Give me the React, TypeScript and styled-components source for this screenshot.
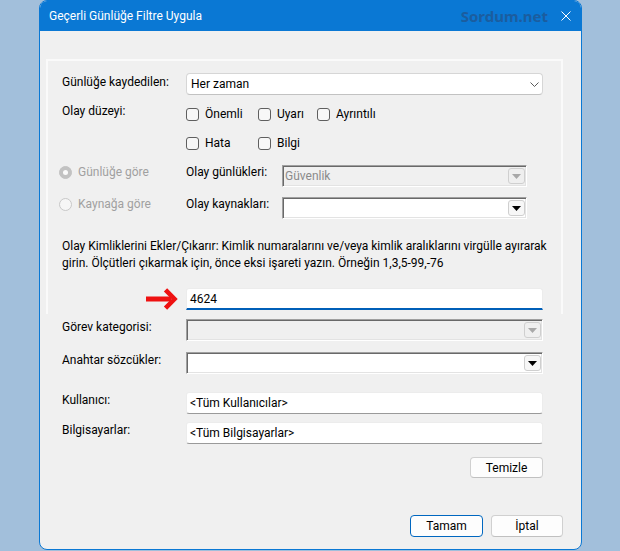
import React from 'react';
import styled, { createGlobalStyle } from 'styled-components';

const GlobalStyle = createGlobalStyle`
  html, body {
    margin: 0;
    padding: 0;
  }
  body {
    background: #a2bfdb;
    font-family: Roboto, "Noto Sans", "DejaVu Sans", sans-serif;
    font-size: 12px;
    color: #000;
  }
`;

const Desktop = styled.div`
  width: 620px;
  height: 551px;
  box-sizing: border-box;
  padding-left: 39px;
  overflow: hidden;
`;

const Window = styled.div`
  width: 543px;
  height: 550px;
  box-sizing: border-box;
  display: flex;
  flex-direction: column;
  background: #f0f0f0;
  border: 1px solid #0a78d4;
  border-radius: 8px;
  overflow: hidden;
`;

const TitleBar = styled.div`
  height: 30px;
  flex-shrink: 0;
  display: flex;
  align-items: center;
  padding: 0 10px 0 9px;
  background: #0a78d4;
  color: #fff;
`;

const Title = styled.span`
  flex: 1;
  font-size: 12px;
`;

const Watermark = styled.span`
  font-family: "Noto Sans", sans-serif;
  font-weight: 700;
  font-size: 15px;
  color: #1b5d9f;
  margin-right: 13px;
`;

const Body = styled.div`
  flex: 1;
  display: flex;
  flex-direction: column;
  padding: 28px 18px 0 6px;
`;

const FilterPanel = styled.div`
  height: 255px;
  box-sizing: border-box;
  border: 2px solid #fafafa;
  border-bottom: none;
  padding: 12px 18px 0 14px;
  display: flex;
  flex-direction: column;
`;

const Form = styled.div`
  display: flex;
  flex-direction: column;
  padding: 0 20px 0 16px;
`;

const Row = styled.div<{ $mt?: number; $end?: boolean }>`
  display: flex;
  align-items: flex-start;
  justify-content: ${({ $end }) => ($end ? 'flex-end' : 'flex-start')};
  margin-top: ${({ $mt }) => $mt ?? 0}px;
`;

const Label = styled.div<{ $w?: number; $pt?: number }>`
  width: ${({ $w }) => $w ?? 124}px;
  flex-shrink: 0;
  line-height: 16px;
  padding-top: ${({ $pt }) => $pt ?? 0}px;
  white-space: nowrap;
`;

const ModernCombo = styled.div`
  flex: 1;
  height: 22px;
  box-sizing: border-box;
  display: flex;
  align-items: center;
  padding: 0 3px 0 4px;
  background: #fff;
  border: 1px solid #d6d6d6;
  border-bottom-color: #c2c2c2;
  border-radius: 4px;
`;

const ComboText = styled.span<{ $muted?: boolean }>`
  flex: 1;
  color: ${({ $muted }) => ($muted ? '#8a8a8a' : '#000')};
  white-space: nowrap;
`;

const ClassicCombo = styled.div<{ $w?: number; $disabled?: boolean; $mt?: number }>`
  ${({ $w }) => ($w ? `width: ${$w}px;` : 'flex: 1;')}
  height: 22px;
  margin-top: ${({ $mt }) => $mt ?? 0}px;
  box-sizing: border-box;
  display: flex;
  align-items: center;
  padding: 0 1px 0 2px;
  background: ${({ $disabled }) => ($disabled ? '#f0f0f0' : '#fff')};
  border: 1px solid;
  border-color: #a0a0a0 #ffffff #ffffff #a0a0a0;
  box-shadow: inset 1px 1px 0 #696969, inset -1px -1px 0 #e3e3e3;
`;

const DropButton = styled.span<{ $disabled?: boolean }>`
  width: 17px;
  height: 16px;
  box-sizing: border-box;
  display: flex;
  align-items: center;
  justify-content: center;
  border: 1px solid #cfcfcf;
  border-radius: 3px;
  background: ${({ $disabled }) => ($disabled ? '#efefef' : '#f7f7f7')};
  color: ${({ $disabled }) => ($disabled ? '#a8a8a8' : '#000')};
`;

const TextBox = styled.div<{ $focused?: boolean }>`
  flex: 1;
  height: 22px;
  box-sizing: border-box;
  display: flex;
  align-items: center;
  padding: 0 3px;
  background: #fff;
  border: 1px solid #ececec;
  border-bottom: ${({ $focused }) => ($focused ? '2px solid #005fb8' : '1px solid #9a9a9a')};
  border-radius: ${({ $focused }) => ($focused ? '3px 3px 0 0' : '3px')};
  white-space: nowrap;
`;

const CheckGrid = styled.div`
  display: grid;
  grid-template-columns: 72px 59px auto;
  row-gap: 13px;
  padding-top: 3px;
`;

const CheckItem = styled.label`
  display: flex;
  align-items: center;
  gap: 6px;
  line-height: 16px;
`;

const CheckBox = styled.span`
  width: 13px;
  height: 13px;
  box-sizing: border-box;
  border: 1px solid #5f5f5f;
  border-radius: 3px;
  background: #f7f7f7;
`;

const RadioItem = styled.div`
  width: 127px;
  margin-left: -3px;
  flex-shrink: 0;
  display: flex;
  align-items: center;
  gap: 6px;
  line-height: 16px;
  color: #a0a0a0;
`;

const RadioDot = styled.span<{ $checked?: boolean }>`
  width: 13px;
  height: 13px;
  box-sizing: border-box;
  border-radius: 50%;
  display: flex;
  align-items: center;
  justify-content: center;
  background: ${({ $checked }) => ($checked ? '#c2c2c2' : '#f6f6f6')};
  border: 1px solid ${({ $checked }) => ($checked ? '#c2c2c2' : '#c8c8c8')};

  &::after {
    content: '';
    width: 5px;
    height: 5px;
    border-radius: 50%;
    background: #fafafa;
    display: ${({ $checked }) => ($checked ? 'block' : 'none')};
  }
`;

const Hint = styled.p`
  margin: 19px -18px 0 0;
  line-height: 17px;
  white-space: nowrap;
`;

const ArrowCell = styled.div`
  width: 124px;
  height: 22px;
  flex-shrink: 0;
  display: flex;
  justify-content: flex-end;
  padding-right: 8px;
  box-sizing: border-box;
`;

const Button = styled.button<{ $w: number; $h?: number; $primary?: boolean }>`
  width: ${({ $w }) => $w}px;
  height: ${({ $h }) => $h ?? 22}px;
  box-sizing: border-box;
  padding: 0;
  font: inherit;
  color: #000;
  background: #fdfdfd;
  border: 1px solid ${({ $primary }) => ($primary ? '#0067c0' : '#d0d0d0')};
  border-bottom-color: ${({ $primary }) => ($primary ? '#0067c0' : '#c0c0c0')};
  border-radius: 4px;
`;

const Footer = styled.div`
  display: flex;
  justify-content: flex-end;
  gap: 8px;
  margin-top: 37px;
`;

const Chevron = () => (
  <svg width="9" height="5" viewBox="0 0 9 5">
    <path d="M0.5 0.5 L4.5 4.5 L8.5 0.5" stroke="#5a5a5a" strokeWidth="1" fill="none" />
  </svg>
);

const Triangle = () => (
  <svg width="9" height="5" viewBox="0 0 9 5">
    <path d="M0 0 H9 L4.5 5 Z" fill="currentColor" />
  </svg>
);

const CloseGlyph = () => (
  <svg width="10" height="10" viewBox="0 0 10 10">
    <path d="M0.5 0.5 L9.5 9.5 M9.5 0.5 L0.5 9.5" stroke="#fff" strokeWidth="1" />
  </svg>
);

const RedArrow = () => (
  <svg width="32" height="22" viewBox="0 0 32 22">
    <rect x="0" y="8.5" width="25" height="5" fill="#ee1111" />
    <polyline points="19.5,1.8 28.5,11 19.5,20.2" fill="none" stroke="#ee1111" strokeWidth="4.6" strokeLinejoin="miter" />
  </svg>
);

const Check = ({ label }: { label: string }) => (
  <CheckItem>
    <CheckBox />
    <span>{label}</span>
  </CheckItem>
);

export default function App() {
  return (
    <>
      <GlobalStyle />
      <Desktop>
        <Window>
          <TitleBar>
            <Title>Geçerli Günlüğe Filtre Uygula</Title>
            <Watermark>Sordum.net</Watermark>
            <CloseGlyph />
          </TitleBar>

          <Body>
            <FilterPanel>
              <Row>
                <Label $pt={1}>Günlüğe kaydedilen:</Label>
                <ModernCombo>
                  <ComboText>Her zaman</ComboText>
                  <Chevron />
                </ModernCombo>
              </Row>

              <Row $mt={8}>
                <Label>Olay düzeyi:</Label>
                <CheckGrid>
                  <Check label="Önemli" />
                  <Check label="Uyarı" />
                  <Check label="Ayrıntılı" />
                  <Check label="Hata" />
                  <Check label="Bilgi" />
                </CheckGrid>
              </Row>

              <Row $mt={13}>
                <RadioItem>
                  <RadioDot $checked />
                  <span>Günlüğe göre</span>
                </RadioItem>
                <Label $w={96}>Olay günlükleri:</Label>
                <ClassicCombo $w={245} $mt={1} $disabled>
                  <ComboText $muted>Güvenlik</ComboText>
                  <DropButton $disabled>
                    <Triangle />
                  </DropButton>
                </ClassicCombo>
              </Row>

              <Row $mt={9}>
                <RadioItem>
                  <RadioDot />
                  <span>Kaynağa göre</span>
                </RadioItem>
                <Label $w={96}>Olay kaynakları:</Label>
                <ClassicCombo $w={245} $mt={1}>
                  <ComboText />
                  <DropButton>
                    <Triangle />
                  </DropButton>
                </ClassicCombo>
              </Row>

              <Hint>
                Olay Kimliklerini Ekler/Çıkarır: Kimlik numaralarını ve/veya kimlik aralıklarını virgülle ayırarak
                <br />
                girin. Ölçütleri çıkarmak için, önce eksi işareti yazın. Örneğin 1,3,5-99,-76
              </Hint>

              <Row $mt={16}>
                <ArrowCell>
                  <RedArrow />
                </ArrowCell>
                <TextBox $focused>4624</TextBox>
              </Row>
            </FilterPanel>

            <Form>
              <Row $mt={5}>
                <Label>Görev kategorisi:</Label>
                <ClassicCombo $disabled>
                  <ComboText />
                  <DropButton $disabled>
                    <Triangle />
                  </DropButton>
                </ClassicCombo>
              </Row>

              <Row $mt={11}>
                <Label>Anahtar sözcükler:</Label>
                <ClassicCombo>
                  <ComboText />
                  <DropButton>
                    <Triangle />
                  </DropButton>
                </ClassicCombo>
              </Row>

              <Row $mt={18}>
                <Label>Kullanıcı:</Label>
                <TextBox>&lt;Tüm Kullanıcılar&gt;</TextBox>
              </Row>

              <Row $mt={8}>
                <Label>Bilgisayarlar:</Label>
                <TextBox>&lt;Tüm Bilgisayarlar&gt;</TextBox>
              </Row>

              <Row $mt={13} $end>
                <Button $w={73} $h={21}>Temizle</Button>
              </Row>
            </Form>

            <Footer>
              <Button $w={73} $primary>Tamam</Button>
              <Button $w={72}>İptal</Button>
            </Footer>
          </Body>
        </Window>
      </Desktop>
    </>
  );
}
